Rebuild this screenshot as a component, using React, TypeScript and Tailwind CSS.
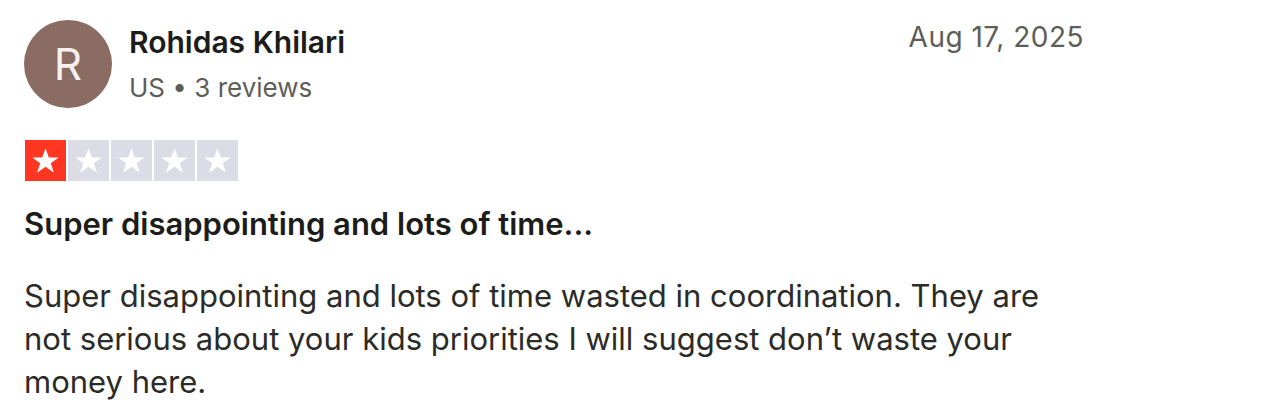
export default function App() {
  const stars = [1, 2, 3, 4, 5];
  const rating = 1;

  return (
    <div className="w-[1268px] h-[416px] bg-white pl-6 pt-5 font-['Inter',sans-serif] overflow-hidden">
      <div className="w-[1060px]">
        <div className="flex items-start">
          <div className="w-[88px] h-[88px] rounded-full bg-[#8b6c62] flex items-center justify-center text-[#f6f1ef] text-[44px] leading-none shrink-0">
            R
          </div>
          <div className="ml-[17px] pt-[4px]">
            <div className="text-[30px] leading-[36px] font-semibold text-[#1c1c1a]">
              Rohidas Khilari
            </div>
            <div className="mt-[10px] text-[26px] leading-[36px] text-[#5e5e59]">
              US • 3 reviews
            </div>
          </div>
          <div className="ml-auto -mt-px text-[28px] leading-[36px] tracking-[0.5px] text-[#5e5e59]">
            Aug 17, 2025
          </div>
        </div>

        <div className="mt-8 flex gap-[2px] pl-px">
          {stars.map((s) => (
            <div
              key={s}
              className={`w-[41px] h-[41px] flex items-center justify-center ${
                s <= rating ? "bg-[#ff3722]" : "bg-[#dcdce6]"
              }`}
            >
              <svg width="31" height="31" viewBox="0 0 24 24">
                <path
                  d="M12 2.5l2.6 7.1h7.6l-6.1 4.5 2.4 7.3L12 16.9l-6.5 4.5 2.4-7.3-6.1-4.5h7.6z"
                  fill="#fff"
                />
              </svg>
            </div>
          ))}
        </div>

        <h3 className="mt-[25px] text-[31px] leading-[36px] font-semibold text-[#1c1c1a]">
          Super disappointing and lots of time...
        </h3>

        <p className="mt-[32px] max-w-[1045px] text-[31px] leading-[43px] text-[#2b2b28]">
          Super disappointing and lots of time wasted in coordination. They are
          not serious about your kids priorities I will suggest don’t waste your
          money here.
        </p>
      </div>
    </div>
  );
}
